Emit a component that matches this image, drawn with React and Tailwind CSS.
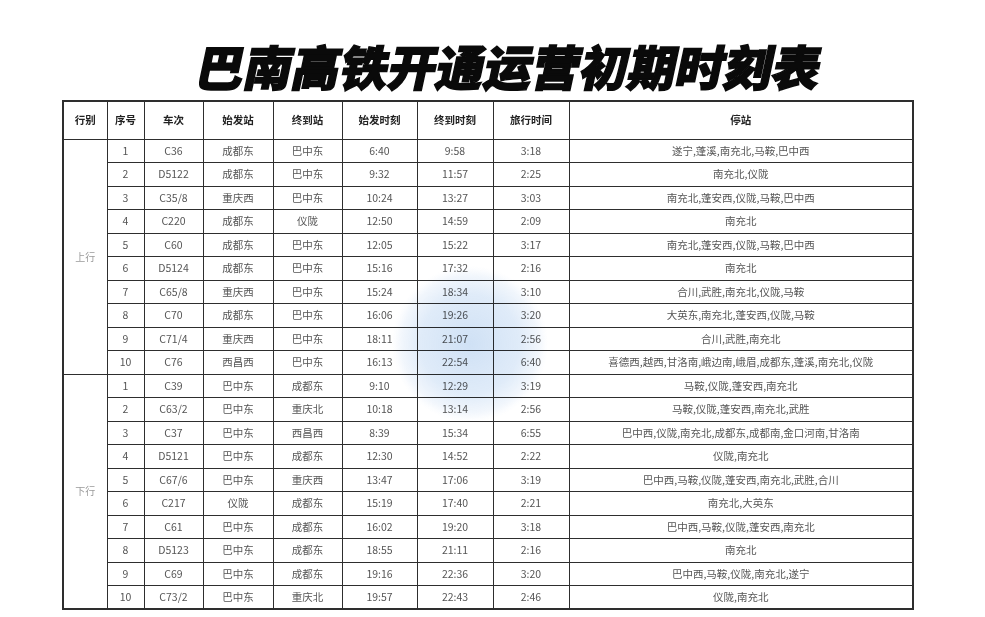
import React from "react";

const up = [
  ["1", "C36", "成都东", "巴中东", "6:40", "9:58", "3:18", "遂宁,蓬溪,南充北,马鞍,巴中西"],
  ["2", "D5122", "成都东", "巴中东", "9:32", "11:57", "2:25", "南充北,仪陇"],
  ["3", "C35/8", "重庆西", "巴中东", "10:24", "13:27", "3:03", "南充北,蓬安西,仪陇,马鞍,巴中西"],
  ["4", "C220", "成都东", "仪陇", "12:50", "14:59", "2:09", "南充北"],
  ["5", "C60", "成都东", "巴中东", "12:05", "15:22", "3:17", "南充北,蓬安西,仪陇,马鞍,巴中西"],
  ["6", "D5124", "成都东", "巴中东", "15:16", "17:32", "2:16", "南充北"],
  ["7", "C65/8", "重庆西", "巴中东", "15:24", "18:34", "3:10", "合川,武胜,南充北,仪陇,马鞍"],
  ["8", "C70", "成都东", "巴中东", "16:06", "19:26", "3:20", "大英东,南充北,蓬安西,仪陇,马鞍"],
  ["9", "C71/4", "重庆西", "巴中东", "18:11", "21:07", "2:56", "合川,武胜,南充北"],
  ["10", "C76", "西昌西", "巴中东", "16:13", "22:54", "6:40", "喜德西,越西,甘洛南,峨边南,峨眉,成都东,蓬溪,南充北,仪陇"],
];

const down = [
  ["1", "C39", "巴中东", "成都东", "9:10", "12:29", "3:19", "马鞍,仪陇,蓬安西,南充北"],
  ["2", "C63/2", "巴中东", "重庆北", "10:18", "13:14", "2:56", "马鞍,仪陇,蓬安西,南充北,武胜"],
  ["3", "C37", "巴中东", "西昌西", "8:39", "15:34", "6:55", "巴中西,仪陇,南充北,成都东,成都南,金口河南,甘洛南"],
  ["4", "D5121", "巴中东", "成都东", "12:30", "14:52", "2:22", "仪陇,南充北"],
  ["5", "C67/6", "巴中东", "重庆西", "13:47", "17:06", "3:19", "巴中西,马鞍,仪陇,蓬安西,南充北,武胜,合川"],
  ["6", "C217", "仪陇", "成都东", "15:19", "17:40", "2:21", "南充北,大英东"],
  ["7", "C61", "巴中东", "成都东", "16:02", "19:20", "3:18", "巴中西,马鞍,仪陇,蓬安西,南充北"],
  ["8", "D5123", "巴中东", "成都东", "18:55", "21:11", "2:16", "南充北"],
  ["9", "C69", "巴中东", "成都东", "19:16", "22:36", "3:20", "巴中西,马鞍,仪陇,南充北,遂宁"],
  ["10", "C73/2", "巴中东", "重庆北", "19:57", "22:43", "2:46", "仪陇,南充北"],
];

const headers = ["行别", "序号", "车次", "始发站", "终到站", "始发时刻", "终到时刻", "旅行时间", "停站"];

const cell = "border-[1.5px] border-[#2e2e2e] text-center align-middle p-0 leading-none";

function Group({ label, rows }) {
  return rows.map((r, i) => (
    <tr key={label + i} className="h-[23.5px]">
      {i === 0 && (
        <td rowSpan={rows.length} className={`${cell} text-[10px] text-[#9a9a9a]`}>
          {label}
        </td>
      )}
      {r.map((v, j) => (
        <td key={j} className={`${cell} text-[10.5px] text-[#555] whitespace-nowrap`}>
          {v}
        </td>
      ))}
    </tr>
  ));
}

export default function App() {
  return (
    <div
      className="relative w-[985px] h-[617px] bg-white overflow-hidden"
      style={{ fontFamily: '"Noto Sans CJK SC", "Noto Sans", sans-serif' }}
    >
      <div className="pt-[41px] pl-[198px] h-[100px]">
        <h1 className="text-[48px] leading-none font-black text-[#0a0a0a] -skew-x-12 [-webkit-text-stroke:1.5px_#0a0a0a] whitespace-nowrap">
          巴南高铁开通运营初期时刻表
        </h1>
      </div>
      <div className="pl-[62px] blur-[0.35px]">
        <table className="table-fixed border-collapse w-[850px] border-[2px] border-[#2e2e2e]">
          <colgroup>
            <col className="w-[44px]" />
            <col className="w-[37px]" />
            <col className="w-[59px]" />
            <col className="w-[70px]" />
            <col className="w-[69px]" />
            <col className="w-[75px]" />
            <col className="w-[76px]" />
            <col className="w-[76px]" />
            <col className="w-[344px]" />
          </colgroup>
          <thead>
            <tr className="h-[38px]">
              {headers.map((h) => (
                <th key={h} className={`${cell} text-[10.5px] font-bold text-[#222]`}>
                  {h}
                </th>
              ))}
            </tr>
          </thead>
          <tbody>
            <Group label="上行" rows={up} />
            <Group label="下行" rows={down} />
          </tbody>
        </table>
      </div>
      <div className="pointer-events-none absolute left-[392px] top-[266px] w-[156px] h-[156px] rounded-full mix-blend-multiply bg-[radial-gradient(circle,rgba(160,195,235,0.5)_0%,rgba(180,208,240,0.42)_45%,rgba(210,226,246,0.3)_62%,rgba(235,242,252,0.15)_68%,rgba(255,255,255,0)_71%)]" />
    </div>
  );
}
